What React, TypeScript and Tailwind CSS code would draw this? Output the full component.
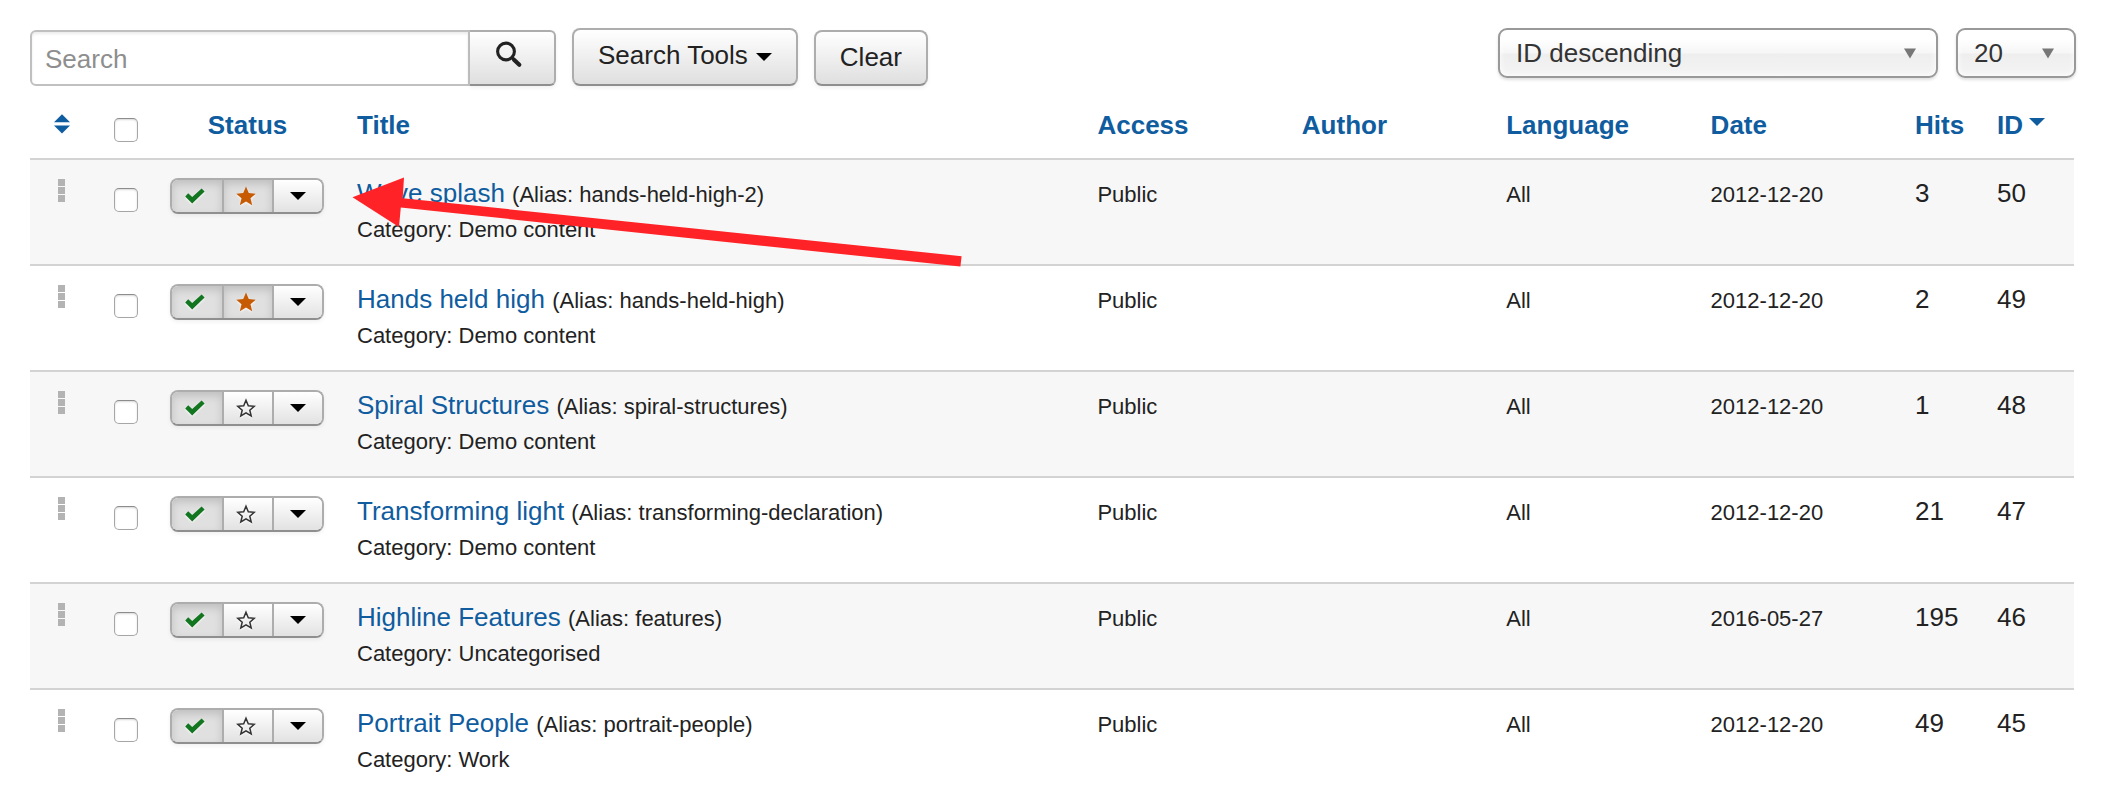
import React from 'react';

type Article = {
  title: string;
  alias: string;
  category: string;
  date: string;
  hits: number;
  id: number;
  featured: boolean;
};

const articles: Article[] = [
  { title: 'Wave splash', alias: 'hands-held-high-2', category: 'Demo content', date: '2012-12-20', hits: 3, id: 50, featured: true },
  { title: 'Hands held high', alias: 'hands-held-high', category: 'Demo content', date: '2012-12-20', hits: 2, id: 49, featured: true },
  { title: 'Spiral Structures', alias: 'spiral-structures', category: 'Demo content', date: '2012-12-20', hits: 1, id: 48, featured: false },
  { title: 'Transforming light', alias: 'transforming-declaration', category: 'Demo content', date: '2012-12-20', hits: 21, id: 47, featured: false },
  { title: 'Highline Features', alias: 'features', category: 'Uncategorised', date: '2016-05-27', hits: 195, id: 46, featured: false },
  { title: 'Portrait People', alias: 'portrait-people', category: 'Work', date: '2012-12-20', hits: 49, id: 45, featured: false },
];

const raised =
  'border-2 border-[#adadad] border-b-[#8f8f8f] bg-linear-to-b from-white to-[#dfdfdf] shadow-[0_2px_4px_rgba(0,0,0,0.06)]';
const segment = 'flex items-center justify-center';
const pressed = 'bg-[#e0e0e0] shadow-[inset_0_4px_8px_rgba(0,0,0,0.15)]';
const idle = 'bg-linear-to-b from-white to-[#e2e2e2]';
const cell = 'px-4 py-[15px] group-last:pb-2.5 align-top text-left';
const head = 'px-4 pt-[17px] pb-[15px] align-top font-bold text-[#0f5c9f]';
const link = 'text-[#0f5c9f]';
const small = 'text-[22px] leading-none';

function Caret() {
  return (
    <svg aria-hidden="true" className="h-2 w-4 shrink-0" viewBox="0 0 16 8">
      <path d="M0 0h16L8 8z" fill="#000" />
    </svg>
  );
}

function SearchIcon() {
  return (
    <svg aria-hidden="true" className="h-[27px] w-[28px]" viewBox="0 0 28 27" fill="none" stroke="#222">
      <circle cx="11" cy="10.5" r="8.4" strokeWidth="3.1" />
      <path d="M17 16.5l2 2" strokeWidth="3" />
      <path d="M19 18.7l5.3 5" strokeWidth="4.2" strokeLinecap="round" />
    </svg>
  );
}

function CheckIcon() {
  return (
    <svg aria-hidden="true" className="h-4 w-5 drop-shadow-[0_1px_1px_rgba(255,255,255,0.9)]" viewBox="0 0 20 16">
      <path d="M0.2 8.4L3.2 5.3 7.2 8.9 16.6 0.4 19.6 3.5 7.2 15.6z" fill="#12751f" />
    </svg>
  );
}

function StarIcon({ filled }: { filled: boolean }) {
  return (
    <svg aria-hidden="true" className="h-5 w-5 drop-shadow-[0_1px_1px_rgba(255,255,255,0.9)]" viewBox="0 0 20 20">
      {filled ? (
        <path d="M10 0.4L12.8 7.1 19.7 7.7 14.5 12.3 16.2 19.2 10 15.5 3.8 19.2 5.5 12.3 0.3 7.7 7.2 7.1z" fill="#c75b04" />
      ) : (
        <path
          d="M10 2.2L12.3 7.8 18.2 8.3 13.8 12.2 15.2 18 10 14.8 4.8 18 6.2 12.2 1.8 8.3 7.7 7.8z"
          fill="none"
          stroke="#333"
          strokeWidth="1.5"
        />
      )}
    </svg>
  );
}

function Checkbox({ label, className }: { label: string; className: string }) {
  return (
    <input
      type="checkbox"
      aria-label={label}
      className={`block size-6 appearance-none rounded-[5px] border border-[#a6a6a6] border-t-[#8c8c8c] bg-white shadow-[inset_0_1px_2px_rgba(0,0,0,0.16)] ${className}`}
    />
  );
}

function Dropdown({ label, options, className }: { label: string; options: string[]; className: string }) {
  return (
    <div className={`relative h-[50px] ${className}`}>
      <select
        aria-label={label}
        className="block h-full w-full appearance-none rounded-[9px] border-2 border-[#999] bg-[linear-gradient(#fff_20%,#f6f6f6_50%,#eee_52%,#f4f4f4_100%)] pl-4 text-[26px] leading-9 text-[#333] shadow-[0_2px_3px_rgba(0,0,0,0.12),inset_0_0_6px_#fff]"
      >
        {options.map((o) => (
          <option key={o}>{o}</option>
        ))}
      </select>
      <svg aria-hidden="true" className="pointer-events-none absolute top-5 right-[22px] h-[11px] w-3" viewBox="0 0 12 11">
        <path d="M0 0.5h12L6 10.5z" fill="#777" />
      </svg>
    </div>
  );
}

function Pointer() {
  return (
    <svg
      aria-hidden="true"
      className="pointer-events-none absolute top-0.5 -left-[5px] z-10 h-[90px] w-[610px]"
      viewBox="0 0 610 90"
    >
      <path d="M0.5 20.3L52 0.6 50.7 21.2 609.6 79.2 608.4 89.6 48.8 30.6 47 50z" fill="#ff2226" />
    </svg>
  );
}

function Row({ article, marked }: { article: Article; marked: boolean }) {
  return (
    <tr className="group border-t-2 border-[#d3d3d3] odd:bg-[#f7f7f7]">
      <td className={cell}>
        <button type="button" aria-label={`Reorder ${article.title}`} className="mx-auto mt-1 flex w-[7px] flex-col gap-px">
          <span className="size-[7px] bg-[#b3b3b3]" />
          <span className="size-[7px] bg-[#b3b3b3]" />
          <span className="size-[7px] bg-[#b3b3b3]" />
        </button>
      </td>
      <td className={`${cell} pl-[21px]`}>
        <Checkbox label={`Select ${article.title}`} className="mt-[13px]" />
      </td>
      <td className={cell}>
        <div className="mt-[3px] flex h-9 w-[154px] overflow-hidden rounded-[8px] border-2 border-[#adadad] border-b-[#8f8f8f] shadow-[0_2px_4px_rgba(0,0,0,0.06)]">
          <button type="button" aria-label="Unpublish" className={`${segment} ${pressed} w-[52px] border-r-2 border-[#adadad] pr-1`}>
            <CheckIcon />
          </button>
          <button
            type="button"
            aria-label="Toggle featured"
            className={`${segment} ${article.featured ? pressed : idle} w-[50px] border-r-2 border-[#adadad] pr-1`}
          >
            <StarIcon filled={article.featured} />
          </button>
          <button type="button" aria-label="More actions" className={`${segment} ${idle} flex-1`}>
            <Caret />
          </button>
        </div>
      </td>
      <td className={cell}>
        <div className="relative">
          <a href="#" className={link}>
            {article.title}
          </a>{' '}
          <span className={small}>(Alias: {article.alias})</span>
          <div className="text-[22px] leading-[38px]">Category: {article.category}</div>
          {marked && <Pointer />}
        </div>
      </td>
      <td className={cell}>
        <span className={small}>Public</span>
      </td>
      <td className={cell} />
      <td className={cell}>
        <span className={small}>All</span>
      </td>
      <td className={cell}>
        <span className={small}>{article.date}</span>
      </td>
      <td className={cell}>{article.hits}</td>
      <td className={cell}>{article.id}</td>
    </tr>
  );
}

export default function App() {
  return (
    <main className="bg-white font-['Liberation_Sans',Arial,sans-serif] text-[26px] leading-9 text-[#222]">
      <div className="flex items-start justify-between pt-7 pr-[26px] pl-[30px]">
        <form className="flex items-end gap-4" onSubmit={(e) => e.preventDefault()}>
          <div className="flex h-14">
            <input
              type="text"
              aria-label="Search"
              placeholder="Search"
              className="w-[440px] rounded-l-[6px] border-2 border-[#c0c0c0] bg-white pt-0.5 pl-[13px] shadow-[inset_0_2px_3px_rgba(0,0,0,0.08)] placeholder:text-[#8e8e8e]"
            />
            <button
              type="submit"
              aria-label="Submit search"
              className={`${raised} flex w-[86px] justify-center rounded-r-[6px] border-l-0 pt-[9px] pr-1.5`}
            >
              <SearchIcon />
            </button>
          </div>
          <button type="button" className={`${raised} flex h-[58px] items-center gap-2 rounded-[8px] px-6 pb-1`}>
            Search Tools
            <span className="pt-1">
              <Caret />
            </span>
          </button>
          <button type="button" className={`${raised} flex h-14 items-center rounded-[8px] px-6 pb-0.5`}>
            Clear
          </button>
        </form>
        <div className="flex gap-[18px]">
          <Dropdown label="Sort by" options={['ID descending', 'ID ascending']} className="w-[440px]" />
          <Dropdown label="Items per page" options={['20', '50', '100']} className="w-[120px]" />
        </div>
      </div>

      <div className="pt-1 pr-7 pl-[30px]">
        <table className="w-full table-fixed border-collapse">
          <colgroup>
            <col className="w-[63px]" />
            <col className="w-[61px]" />
            <col className="w-[187px]" />
            <col />
            <col className="w-[10%]" />
            <col className="w-[10%]" />
            <col className="w-[10%]" />
            <col className="w-[10%]" />
            <col className="w-[82px]" />
            <col className="w-[93px]" />
          </colgroup>
          <thead>
            <tr className="text-left">
              <th scope="col" className={head}>
                <a href="#" aria-label="Sort by ordering" className="flex justify-center pt-[7px]">
                  <svg aria-hidden="true" className="h-5 w-4" viewBox="0 0 16 20">
                    <path d="M0 8.3L8 0.3l8 8zM0 11.6h16l-8 8z" fill="#0f5c9f" />
                  </svg>
                </a>
              </th>
              <th scope="col" className={`${head} pl-[21px]`}>
                <Checkbox label="Select all" className="mt-[11px]" />
              </th>
              <th scope="col" className={`${head} text-center`}>
                <a href="#">Status</a>
              </th>
              <th scope="col" className={head}>
                <a href="#">Title</a>
              </th>
              <th scope="col" className={head}>
                <a href="#">Access</a>
              </th>
              <th scope="col" className={head}>
                <a href="#">Author</a>
              </th>
              <th scope="col" className={head}>
                <a href="#">Language</a>
              </th>
              <th scope="col" className={head}>
                <a href="#">Date</a>
              </th>
              <th scope="col" className={head}>
                <a href="#">Hits</a>
              </th>
              <th scope="col" className={head}>
                <a href="#" className="flex items-center gap-1.5">
                  ID
                  <svg aria-hidden="true" className="mb-1.5 h-2 w-4" viewBox="0 0 16 8">
                    <path d="M0 0h16L8 8z" fill="#0f5c9f" />
                  </svg>
                </a>
              </th>
            </tr>
          </thead>
          <tbody>
            {articles.map((article, i) => (
              <Row key={article.id} article={article} marked={i === 0} />
            ))}
          </tbody>
        </table>
      </div>
    </main>
  );
}
